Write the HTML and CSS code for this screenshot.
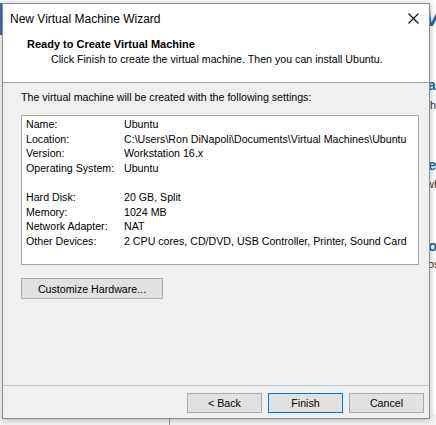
FILE: index.html
```html
<!DOCTYPE html>
<html>
<head>
<meta charset="utf-8">
<link rel="stylesheet" href="styles.css">
</head>
<body>
<div class="desktop">
  <div class="bg-strip"></div>
  <div class="bg-bottom"><div class="bg-vline"></div></div>
  <span class="frag frag-v">V</span>
  <span class="frag frag-la">la</span>
  <span class="frag frag-h">h</span>
  <span class="frag frag-e">e</span>
  <span class="frag frag-wh">wh</span>
  <span class="frag frag-o">o</span>
  <span class="frag frag-os">os</span>

  <div class="dialog">
    <div class="titlebar">
      <span class="title">New Virtual Machine Wizard</span>
      <svg class="close" width="11" height="11" viewBox="0 0 11 11">
        <path d="M0.5 0.5 L10.5 10.5 M10.5 0.5 L0.5 10.5" stroke="#111" stroke-width="1.1" fill="none"/>
      </svg>
    </div>
    <div class="header">
      <div class="heading">Ready to Create Virtual Machine</div>
      <div class="subheading">Click Finish to create the virtual machine. Then you can install Ubuntu.</div>
    </div>
    <div class="body">
      <div class="intro">The virtual machine will be created with the following settings:</div>
      <div class="settings">
        <div class="row"><span class="label">Name:</span><span class="value">Ubuntu</span></div>
        <div class="row"><span class="label">Location:</span><span class="value">C:\Users\Ron DiNapoli\Documents\Virtual Machines\Ubuntu</span></div>
        <div class="row"><span class="label">Version:</span><span class="value">Workstation 16.x</span></div>
        <div class="row"><span class="label">Operating System:</span><span class="value">Ubuntu</span></div>
        <div class="row"><span class="label">&nbsp;</span><span class="value"></span></div>
        <div class="row"><span class="label">Hard Disk:</span><span class="value">20 GB, Split</span></div>
        <div class="row"><span class="label">Memory:</span><span class="value">1024 MB</span></div>
        <div class="row"><span class="label">Network Adapter:</span><span class="value">NAT</span></div>
        <div class="row"><span class="label">Other Devices:</span><span class="value">2 CPU cores, CD/DVD, USB Controller, Printer, Sound Card</span></div>
      </div>
      <button class="btn btn-customize">Customize Hardware...</button>
    </div>
    <div class="footer">
      <button class="btn">&lt; Back</button>
      <button class="btn btn-default">Finish</button>
      <button class="btn">Cancel</button>
    </div>
  </div>
</div>
</body>
</html>
```

FILE: styles.css
```css
html, body {
  margin: 0;
  padding: 0;
  background: #fdfdfd;
  overflow: hidden;
}

.desktop {
  position: relative;
  width: 436px;
  height: 425px;
  overflow: hidden;
  font-family: "Liberation Sans", Arial, sans-serif;
  font-size: 10.65px;
  color: #000;
}

.bg-strip {
  position: absolute;
  left: 0;
  top: 3px;
  width: 3px;
  height: 32px;
  background: #3f6fae;
}

.bg-bottom {
  position: absolute;
  left: 0;
  top: 414px;
  width: 436px;
  height: 11px;
  background: #f3f3f3;
}

.bg-vline {
  position: absolute;
  left: 169px;
  top: 0;
  width: 1px;
  height: 11px;
  background: #9a9a9a;
}

.frag {
  position: absolute;
  white-space: nowrap;
  line-height: 1;
}

.frag-v { left: 424px; top: 6px; font-size: 24px; font-weight: bold; color: #2a62a8; font-style: italic; }
.frag-la { left: 424px; top: 78px; font-size: 14px; font-weight: bold; color: #2a62a8; }
.frag-h { left: 430px; top: 100px; font-size: 11px; color: #333; }
.frag-e { left: 428px; top: 157px; font-size: 15px; font-weight: bold; color: #2a62a8; }
.frag-wh { left: 426px; top: 179px; font-size: 11px; color: #333; }
.frag-o { left: 428px; top: 238px; font-size: 15px; font-weight: bold; color: #2a62a8; }
.frag-os { left: 428px; top: 259px; font-size: 11px; color: #333; }

.dialog {
  position: absolute;
  left: 2px;
  top: 3px;
  width: 428px;
  height: 416px;
  box-sizing: border-box;
  border: 1px solid #8c8c8c;
  background: #f0f0f0;
  box-shadow: 0 1px 6px rgba(0, 0, 0, 0.28);
  display: flex;
  flex-direction: column;
}

.titlebar {
  height: 30px;
  background: #fff;
  display: flex;
  align-items: center;
  justify-content: space-between;
  padding-left: 7px;
  padding-right: 10px;
  flex: none;
}

.title {
  font-size: 12px;
  line-height: 30px;
  color: #000;
}

.close {
  display: block;
  margin-top: -1px;
}

.header {
  height: 48px;
  box-sizing: content-box;
  background: #fff;
  border-bottom: 1px solid #a0a0a0;
  flex: none;
}

.heading {
  font-weight: bold;
  font-size: 11px;
  line-height: 15px;
  padding-left: 24px;
  padding-top: 3px;
}

.subheading {
  line-height: 15px;
  padding-left: 48px;
}

.body {
  flex: 1;
  padding: 7px 0 0 18px;
  display: flex;
  flex-direction: column;
  align-items: flex-start;
}

.intro {
  line-height: 15px;
  margin-bottom: 10px;
}

.settings {
  width: 398px;
  height: 150px;
  box-sizing: border-box;
  background: #fff;
  border: 1px solid #a5a5a5;
  padding: 1px 4px 0 4px;
}

.row {
  display: flex;
  line-height: 14.6px;
  height: 14.6px;
  white-space: nowrap;
}

.label {
  width: 98px;
  flex: none;
}

.btn {
  font-family: "Liberation Sans", Arial, sans-serif;
  font-size: 10.65px;
  color: #000;
  background: #e1e1e1;
  border: 1px solid #adadad;
  height: 20px;
  width: 75px;
  padding: 0;
  margin: 0;
  box-sizing: border-box;
  line-height: 18px;
}

.btn-customize {
  margin-top: 13px;
  width: 142px;
  height: 21px;
}

.btn-default {
  border-color: #0078d7;
}

.footer {
  flex: none;
  height: 33px;
  box-sizing: border-box;
  border-top: 1px solid #c8c8c8;
  padding: 7px 5px 0 0;
  display: flex;
  justify-content: flex-end;
  gap: 6px;
}
```
